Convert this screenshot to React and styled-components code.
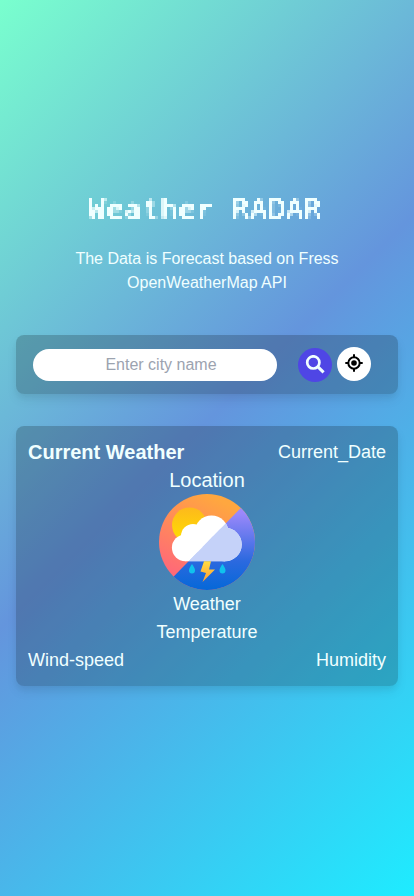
import React from "react";
import styled, { createGlobalStyle } from "styled-components";

const GlobalStyle = createGlobalStyle`
  * { box-sizing: border-box; }
  html, body { margin: 0; }
  body { font-family: "Liberation Sans", Arial, sans-serif; color: #f0ffff; }
`;

const Page = styled.main`
  min-height: 100vh;
  padding: 0 16px 22px;
  display: flex;
  flex-direction: column;
  justify-content: center;
  gap: 32px;
  background: linear-gradient(135deg, #79ffce 0%, #6495dd 48%, #1eecff 100%);
`;

const Header = styled.header`
  padding-top: 3px;
  text-align: center;
`;

const Title = styled.h1`
  margin: 0 0 20px;
  padding-top: 1px;
  font: 400 29px/35px "DejaVu Sans Mono", monospace;
  letter-spacing: 0.54px;
  text-indent: -4px;
  filter: url(#dot-matrix);
`;

const FilterDefs = styled.svg`
  display: block;
  width: 0;
  height: 0;
`;

const Intro = styled.p`
  width: 280px;
  margin: 0 auto 8px;
  font-size: 16px;
  line-height: 24px;
`;

const Panel = styled.section`
  border-radius: 8px;
  background: rgba(0, 0, 0, 0.2);
  box-shadow: 0 4px 6px -1px rgba(0, 0, 0, 0.06), 0 6px 12px rgba(0, 0, 0, 0.06);
`;

const SearchPanel = styled(Panel)`
  height: 59px;
  padding: 0 27px 0 17px;
  display: flex;
  align-items: center;
`;

const CityInput = styled.input`
  width: 244px;
  height: 32px;
  margin: 1px 21px 0 0;
  padding: 0 0 0 12px;
  border: 0;
  border-radius: 16px;
  background: #fff;
  font: 16px/24px "Liberation Sans", Arial, sans-serif;
  text-align: center;
  &::placeholder { color: #9ca3af; opacity: 1; }
`;

const RoundButton = styled.button`
  width: 34px;
  height: 34px;
  margin: ${(p) => (p.$primary ? "1px 5px 0 0" : "0 0 1px")};
  padding: 0;
  display: grid;
  place-items: center;
  border: 0;
  border-radius: 50%;
  color: ${(p) => (p.$primary ? "#f0ffff" : "#000")};
  background: ${(p) => (p.$primary ? "#4f46e5" : "#fff")};
`;

const WeatherPanel = styled(Panel)`
  height: 260px;
  padding: 12px;
  display: flex;
  flex-direction: column;
  font-size: 18px;
  line-height: 28px;
`;

const Row = styled.div`
  display: flex;
  justify-content: space-between;
`;

const Heading = styled.h2`
  margin: 0;
  font-size: 20px;
  line-height: 28px;
`;

const Center = styled.div`
  display: flex;
  flex-direction: column;
  align-items: center;
`;

const Place = styled.span`
  font-size: 20px;
`;

const Art = styled.svg`
  display: block;
  width: 96px;
  height: 96px;
`;

const SearchIcon = () => (
  <svg width="20" height="20" viewBox="0 0 20 20" fill="none" stroke="currentColor">
    <circle cx="8.3" cy="7.4" r="6.1" strokeWidth="2.7" />
    <path d="M12.7 11.7L18.6 17.3" strokeWidth="3.1" />
  </svg>
);

const LocateIcon = () => (
  <svg width="20" height="20" viewBox="0 0 20 20" fill="none" stroke="currentColor" strokeWidth="2">
    <circle cx="10" cy="9" r="5.7" />
    <circle cx="10" cy="9" r="2.8" fill="currentColor" stroke="none" />
    <path d="M10 .3v3M10 14.7v3M1.3 9h3M15.7 9h3" />
  </svg>
);

const Cloud = (props) => (
  <g {...props}>
    <circle cx="26.3" cy="53.8" r="13.4" />
    <circle cx="34" cy="42" r="12" />
    <circle cx="52.5" cy="38.5" r="17" />
    <circle cx="66" cy="50.5" r="16.7" />
    <rect x="26" y="42" width="40" height="25.2" />
  </g>
);

const WeatherArt = () => (
  <Art viewBox="0 0 96 96" role="img" aria-label="Thunderstorm">
    <defs>
      <linearGradient id="warm" x1="0" y1="1" x2=".5" y2="0">
        <stop offset=".2" stopColor="#ff6978" />
        <stop offset="1" stopColor="#ffa73f" />
      </linearGradient>
      <linearGradient id="cool" x1="0" y1="1" x2="0" y2="0">
        <stop stopColor="#0568d8" />
        <stop offset=".3" stopColor="#2b69df" />
        <stop offset=".8" stopColor="#9b88fa" />
        <stop offset="1" stopColor="#a58bff" />
      </linearGradient>
      <linearGradient id="sun" x1=".3" y1="0" x2=".3" y2="1">
        <stop stopColor="#fdb91c" />
        <stop offset="1" stopColor="#ffe000" />
      </linearGradient>
      <linearGradient id="bolt" x1="0" y1="0" x2="0" y2="1">
        <stop stopColor="#ffdd42" />
        <stop offset="1" stopColor="#ff9b36" />
      </linearGradient>
      <clipPath id="lower"><path d="M96 -0.5L0 97.5L48 110H110V0Z" /></clipPath>
    </defs>
    <circle cx="48" cy="48" r="48" fill="url(#warm)" />
    <circle cx="48" cy="48" r="48" fill="url(#cool)" clipPath="url(#lower)" />
    <circle cx="30.5" cy="31" r="17.5" fill="url(#sun)" />
    <Cloud fill="#fff" />
    <Cloud fill="#c5d2f9" clipPath="url(#lower)" />
    <path d="M45 67.2L41.5 77.5L47 79L43.5 88L56 75.5H50L52 67.2Z" fill="url(#bolt)" />
    <path d="M33 70C31 73 30 74.5 30 76.5A3 3 0 0 0 36 76.5C36 74.5 35 73 33 70ZM63.5 70C61.5 73 60.5 74.5 60.5 76.5A3 3 0 0 0 66.5 76.5C66.5 74.5 65.5 73 63.5 70Z" fill="#10c2ed" />
  </Art>
);

/* Samples the text once per 3px cell and grows each sample into a square dot. */
const DotMatrixFilter = () => (
  <FilterDefs aria-hidden="true">
    <filter id="dot-matrix" filterUnits="userSpaceOnUse" primitiveUnits="userSpaceOnUse" x="0" y="0" width="382" height="36" colorInterpolationFilters="sRGB">
      <feGaussianBlur in="SourceGraphic" stdDeviation=".8" result="soft" />
      <feFlood x="2" y="2" width="1" height="1" floodColor="#000" result="dot" />
      <feOffset in="dot" dx="0" dy="0" x="1" y="1" width="3" height="3" result="cell" />
      <feTile in="cell" x="0" y="0" width="382" height="36" result="grid" />
      <feComposite in="soft" in2="grid" operator="in" x="0" y="0" width="382" height="36" />
      <feMorphology operator="dilate" radius="1" />
      <feComponentTransfer>
        <feFuncR type="linear" slope="0" intercept=".94" />
        <feFuncG type="linear" slope="0" intercept="1" />
        <feFuncB type="linear" slope="0" intercept="1" />
        <feFuncA type="linear" slope="5" intercept="-1.3" />
      </feComponentTransfer>
    </filter>
  </FilterDefs>
);

export default function App() {
  return (
    <>
      <GlobalStyle />
      <Page>
        <Header>
          <DotMatrixFilter />
          <Title>Weather RADAR</Title>
          <Intro>The Data is Forecast based on Fress OpenWeatherMap API</Intro>
        </Header>
        <SearchPanel>
          <CityInput placeholder="Enter city name" />
          <RoundButton $primary aria-label="Search"><SearchIcon /></RoundButton>
          <RoundButton aria-label="Use my location"><LocateIcon /></RoundButton>
        </SearchPanel>
        <WeatherPanel>
          <Row>
            <Heading>Current Weather</Heading>
            <span>Current_Date</span>
          </Row>
          <Center>
            <Place>Location</Place>
            <WeatherArt />
            <span>Weather</span>
            <span>Temperature</span>
          </Center>
          <Row>
            <span>Wind-speed</span>
            <span>Humidity</span>
          </Row>
        </WeatherPanel>
      </Page>
    </>
  );
}
